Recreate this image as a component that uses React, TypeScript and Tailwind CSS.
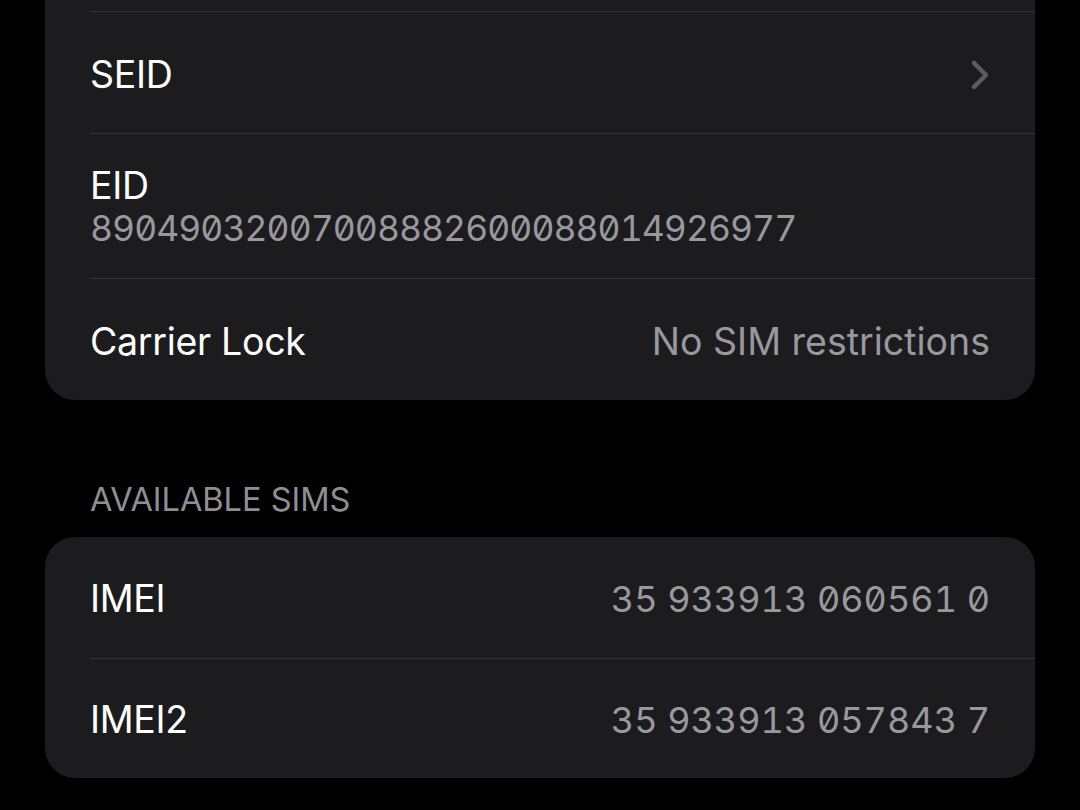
const font = "font-['Inter','Liberation_Sans',sans-serif]"

const Chevron = () => (
  <svg width="20" height="32" viewBox="0 0 20 32" fill="none">
    <polyline points="4,4 16,16 4,28" stroke="#5c5c60" strokeWidth="4.5" strokeLinecap="round" strokeLinejoin="round" />
  </svg>
)

const Row = ({ label, value, chevron, h }: { label: string; value?: string; chevron?: boolean; h: string }) => (
  <div className={`flex items-center justify-between border-t border-[#353538] pr-[45px] pt-[4px] ${h}`}>
    <span className="text-[37.5px] leading-[46px] text-white tracking-[-0.3px]">{label}</span>
    {value && <span className="text-[37.5px] leading-[46px] text-[#98989e]">{value}</span>}
    {chevron && <Chevron />}
  </div>
)

export default function App() {
  return (
    <div className={`min-h-screen bg-black px-[45px] ${font}`}>
      <div className="rounded-b-[30px] bg-[#1c1c1e] pl-[45px]">
        <div className="h-[11px]" />
        <Row label="SEID" chevron h="h-[122px]" />
        <div className="flex h-[145px] flex-col justify-center border-t border-[#353538] pr-[45px] pt-[2px]">
          <span className="text-[37.5px] leading-[43px] text-white tracking-[-0.3px]">EID</span>
          <span className="text-[35.5px] leading-[43px] text-[#98989e] tabular-nums slashed-zero tracking-[-0.95px]">89049032007008882600088014926977</span>
        </div>
        <Row label="Carrier Lock" value="No SIM restrictions" h="h-[122px]" />
      </div>

      <div className="h-[137px] pl-[45px] pt-[80px]">
        <span className="text-[32.5px] leading-[40px] text-[#8e8e93]">AVAILABLE SIMS</span>
      </div>

      <div className="overflow-hidden rounded-[30px] bg-[#1c1c1e] pl-[45px]">
        <div className="flex h-[121px] items-center justify-between pr-[45px] pt-[2px]">
          <span className="text-[37.5px] leading-[46px] text-white tracking-[-0.3px]">IMEI</span>
          <span className="text-[36px] leading-[46px] text-[#98989e] tabular-nums slashed-zero">35 933913 060561 0</span>
        </div>
        <div className="flex h-[120px] items-center justify-between border-t border-[#353538] pr-[45px] pt-[2px]">
          <span className="text-[37.5px] leading-[46px] text-white tracking-[-0.3px]">IMEI2</span>
          <span className="text-[36px] leading-[46px] text-[#98989e] tabular-nums slashed-zero">35 933913 057843 7</span>
        </div>
      </div>
    </div>
  )
}
